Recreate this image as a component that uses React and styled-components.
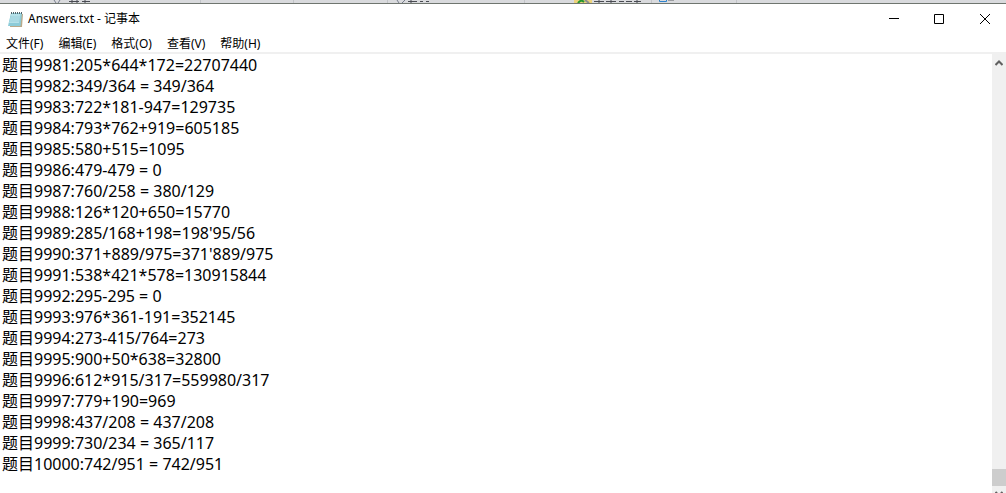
import React from "react"
import styled, { createGlobalStyle } from "styled-components"

const fonts = {
  text: `"Noto Sans", "Noto Sans CJK SC", sans-serif`,
}

const colors = {
  text: "#000",
  background: "#fff",
  shade: "#f0f0f0",
  thumb: "#cdcdcd",
  arrow: "#606060",
  border: "#6f756f",
}

const menus = ["文件(F)", "编辑(E)", "格式(O)", "查看(V)", "帮助(H)"]

const lines = [
  "题目9981:205*644*172=22707440",
  "题目9982:349/364 = 349/364",
  "题目9983:722*181-947=129735",
  "题目9984:793*762+919=605185",
  "题目9985:580+515=1095",
  "题目9986:479-479 = 0",
  "题目9987:760/258 = 380/129",
  "题目9988:126*120+650=15770",
  "题目9989:285/168+198=198'95/56",
  "题目9990:371+889/975=371'889/975",
  "题目9991:538*421*578=130915844",
  "题目9992:295-295 = 0",
  "题目9993:976*361-191=352145",
  "题目9994:273-415/764=273",
  "题目9995:900+50*638=32800",
  "题目9996:612*915/317=559980/317",
  "题目9997:779+190=969",
  "题目9998:437/208 = 437/208",
  "题目9999:730/234 = 365/117",
  "题目10000:742/951 = 742/951",
]

const GlobalStyle = createGlobalStyle`
  * {
    box-sizing: border-box;
  }
  body {
    margin: 0;
    background: ${colors.background};
    color: ${colors.text};
    font-family: ${fonts.text};
  }
`

const Page = styled.div`
  display: flex;
  flex-direction: column;
  height: 100vh;
  overflow: hidden;
`

const Backdrop = styled.svg`
  display: block;
  flex: none;
  width: 100%;
  height: 3px;
  background: #d9dadd;
`

const Window = styled.main`
  display: flex;
  flex: 1;
  flex-direction: column;
  min-height: 0;
  border-top: 1px solid ${colors.border};
`

const TitleBar = styled.header`
  display: flex;
  flex: none;
  align-items: center;
  height: 30px;
  padding-left: 7px;
`

const Title = styled.h1`
  flex: 1;
  margin: 0 0 0 4px;
  font-size: 12px;
  font-weight: 400;
  line-height: 18px;
`

const WindowButton = styled.button`
  display: flex;
  align-items: center;
  justify-content: center;
  width: 45px;
  height: 30px;
  padding: 0;
  border: 0;
  background: transparent;

  &:hover {
    background: ${props => (props.$danger ? "#e81123" : "#e5e5e5")};
  }
`

const MenuBar = styled.nav`
  display: flex;
  flex: none;
  gap: 2px;
  height: 18px;
`

const MenuButton = styled.button`
  padding: 2px 7px 0 6px;
  border: 0;
  background: transparent;
  color: ${colors.text};
  font-family: ${fonts.text};
  font-size: 12px;
  line-height: 16px;

  &:hover {
    background: #e5f3ff;
  }
`

const Editor = styled.div`
  display: flex;
  flex: 1;
  min-height: 0;
  border-top: 2px solid ${colors.shade};
`

const TextArea = styled.textarea`
  flex: 1;
  min-width: 0;
  padding: 1px 2px 0;
  border: 0;
  outline: 0;
  resize: none;
  overflow: hidden;
  background: ${colors.background};
  color: ${colors.text};
  font-family: ${fonts.text};
  font-size: 16px;
  line-height: 21px;
  white-space: pre;
`

const ScrollBar = styled.div`
  display: flex;
  flex: none;
  flex-direction: column;
  width: 14px;
  background: ${colors.shade};
`

const Track = styled.div`
  display: flex;
  flex: 1;
  align-items: flex-end;
`

const Thumb = styled.div`
  width: 100%;
  height: 17px;
  background: ${colors.thumb};
`

const ArrowButton = styled.button`
  display: flex;
  flex: none;
  justify-content: center;
  height: ${props => (props.$down ? "7px" : "17px")};
  padding: ${props => (props.$down ? "5px" : "6px")} 0 0;
  border: 0;
  overflow: hidden;
  background: ${colors.shade};
`

const NotepadIcon = () => (
  <svg width="17" height="17" viewBox="0 0 17 17" aria-hidden="true">
    <path d="M4 3h12l-1 13H3z" fill="#b9a98a" />
    <path d="M4 2h11l-1.500 13H1z" fill="#8ccbd8" />
    <path d="M4 3h9.500l-1.500 9H2z" fill="#b5e1e9" />
    <path d="M3 6h10M3 8h10M2.500 10h10" stroke="#86c2d0" strokeWidth=".5" />
    <path d="M4 2h11" stroke="#53656b" strokeWidth="2" strokeDasharray="1 1" />
  </svg>
)

// toolbar of the program behind, only its last rows show above the window
const ToolbarEdge = () => (
  <Backdrop aria-hidden="true">
    <path
      d="M200.500 0v3M293.500 0v3M387.500 0v3M524.500 0v3M651.500 0v3M736.500 0v3"
      stroke="#c2c4c8"
    />
    <path d="M54 0l2 3M60 0l-2 3M397 0l2 3M405 0l-3 3" fill="none" stroke="#777d8c" />
    <path
      d="M69 1.500h10M82 1.500h8M72 0v3M77 0v3M85 0v3M408 1.500h9M411 0v3M420 1.500h3M426 1.500h3M594 1.500h10M599 0v3M606 1.500h10M611 0v3M619 1.500h5M626 1.500h6M634 1.500h7M637 0v3"
      stroke="#494b52"
    />
    <path d="M574 0h18v3h-18z" fill="#ecd27c" />
    <path d="M578 3q3-4 6-1" fill="none" stroke="#25962f" strokeWidth="2" />
    <path d="M585 0l4 3" stroke="#8b8d91" strokeWidth="2" />
    <path d="M659.500 0v1.500h7V0" fill="none" stroke="#2d82cc" />
    <path d="M668 .5h6" stroke="#9a9ca0" />
  </Backdrop>
)

const App = () => (
  <>
    <GlobalStyle />
    <Page>
      <ToolbarEdge />
      <Window>
        <TitleBar>
          <NotepadIcon />
          <Title>Answers.txt - 记事本</Title>
          <WindowButton aria-label="最小化">
            <svg width="10" height="10" viewBox="0 0 10 10">
              <path d="M0 4.500h10" stroke="#000" />
            </svg>
          </WindowButton>
          <WindowButton aria-label="最大化">
            <svg width="10" height="10" viewBox="0 0 10 10">
              <path d="M.5.5h9v9h-9z" fill="none" stroke="#000" />
            </svg>
          </WindowButton>
          <WindowButton aria-label="关闭" $danger>
            <svg width="12" height="10" viewBox="0 0 12 10">
              <path d="M2 0l10 10M12 0L2 10" stroke="#000" />
            </svg>
          </WindowButton>
        </TitleBar>
        <MenuBar>
          {menus.map(menu => (
            <MenuButton key={menu}>{menu}</MenuButton>
          ))}
        </MenuBar>
        <Editor>
          <TextArea
            aria-label="文本编辑器"
            spellCheck={false}
            defaultValue={lines.join("\n")}
          />
          <ScrollBar>
            <ArrowButton aria-label="向上滚动">
              <svg width="8" height="6" viewBox="0 0 8 6">
                <path d="M.5 5L4 1.500 7.500 5" fill="none" stroke={colors.arrow} strokeWidth="2" />
              </svg>
            </ArrowButton>
            <Track>
              <Thumb />
            </Track>
            <ArrowButton aria-label="向下滚动" $down>
              <svg width="8" height="6" viewBox="0 0 8 6">
                <path d="M.5 1L4 4.500 7.500 1" fill="none" stroke={colors.arrow} strokeWidth="2" />
              </svg>
            </ArrowButton>
          </ScrollBar>
        </Editor>
      </Window>
    </Page>
  </>
)

export default App
